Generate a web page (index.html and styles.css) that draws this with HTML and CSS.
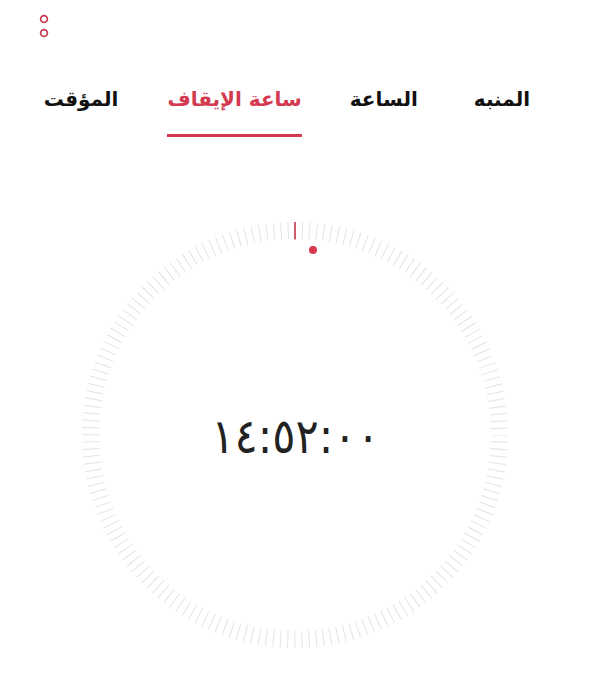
FILE: index.html
```html
<!DOCTYPE html>
<html lang="ar" dir="rtl">
<head>
<meta charset="utf-8">
<title>ساعة الإيقاف</title>
<link rel="stylesheet" href="styles.css">
</head>
<body>
<div class="app">
  <header class="topbar">
    <button class="more" aria-label="المزيد">
      <svg width="12" height="26" viewBox="0 0 12 26">
        <circle cx="6" cy="6" r="3.4" fill="none" stroke="#c63a51" stroke-width="1.7"/>
        <circle cx="6" cy="20" r="3.4" fill="none" stroke="#c63a51" stroke-width="1.7"/>
      </svg>
    </button>
  </header>
  <nav class="tabs">
    <a class="tab t1"><span>المنبه</span></a>
    <a class="tab t2"><span>الساعة</span></a>
    <a class="tab t3 active"><span>ساعة الإيقاف</span></a>
    <a class="tab t4"><span>المؤقت</span></a>
  </nav>
  <main class="stopwatch">
    <div class="dial">
      <svg class="ring" width="426" height="426" viewBox="0 0 426 426">
        <circle cx="213" cy="213" r="204.5" fill="none" stroke="#e3e3e3" stroke-width="17" stroke-dasharray="1 6.138" stroke-dashoffset="0.5"/>
        <line x1="213" y1="0" x2="213" y2="17.5" stroke="#c8364b" stroke-width="1.6"/>
        <circle cx="231" cy="28" r="4" fill="#d8394e"/>
      </svg>
      <div class="time" dir="ltr">١٤:٥٢:٠٠</div>
    </div>
  </main>
</div>
</body>
</html>
```
FILE: styles.css
```css
* { box-sizing: border-box; }
html, body { margin: 0; padding: 0; background: #fff; }
body {
  font-family: "DejaVu Sans", "Noto Sans", sans-serif;
  color: #111;
  width: 591px;
  height: 686px;
  overflow: hidden;
}
.topbar {
  height: 50px;
  display: flex;
  justify-content: flex-end;
  align-items: flex-start;
  padding-left: 38px;
  padding-top: 13px;
}
.more {
  border: 0;
  background: none;
  padding: 0;
  width: 12px;
  height: 26px;
  display: block;
}
.more svg { display: block; }
.tabs {
  display: flex;
  padding-right: 61px;
}
.tab {
  display: block;
  padding-top: 34px;
  font-size: 20px;
  font-weight: bold;
  line-height: 30px;
  color: #111;
}
.tab span {
  display: inline-block;
  padding-bottom: 20px;
  border-bottom: 3px solid transparent;
}
.t2 { margin-right: 56px; }
.t3 { margin-right: 48px; }
.t4 { margin-right: 49px; }
.tab.active { color: #d33a4f; }
.tab.active span { border-bottom-color: #d33a4f; }
.stopwatch {
  padding-top: 85px;
  display: flex;
  justify-content: flex-end;
  padding-left: 82px;
}
.dial {
  position: relative;
  width: 426px;
  height: 426px;
  display: flex;
  align-items: center;
  justify-content: center;
}
.ring {
  position: absolute;
  left: 0;
  top: 0;
}
.time {
  position: relative;
  font-size: 48px;
  line-height: 1;
  color: #222;
  margin-top: 2px;
  margin-left: 2px;
  transform: scaleX(0.9);
}
```
